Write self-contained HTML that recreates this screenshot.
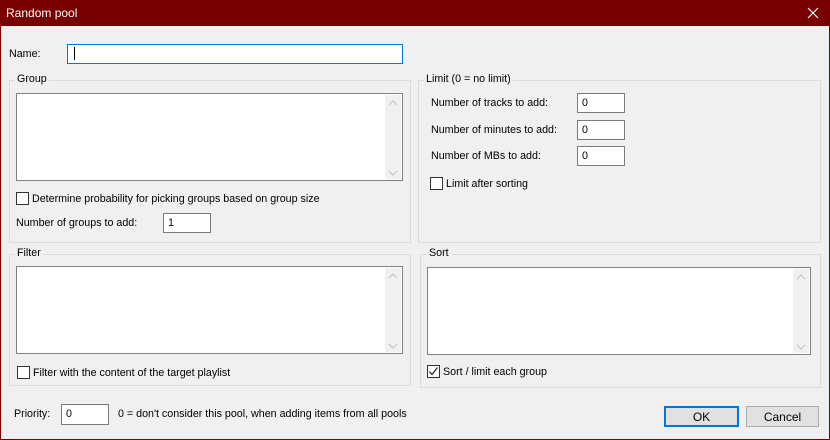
<!DOCTYPE html>
<html><head><style>
*{box-sizing:border-box;margin:0;padding:0}
body{width:830px;height:440px;background:#f0f0f0;font-family:"Liberation Sans",sans-serif;font-size:10.7px;color:#000;position:relative;overflow:hidden}
.a{position:absolute}
.frame{left:0;top:0;width:830px;height:440px;border:1px solid #7a0000;border-top:none}
.title{left:0;top:0;width:830px;height:26px;background:#780000;color:#fff;font-size:12px;padding:6px 0 0 6px}
.in{background:#fff;border:1px solid #7a7a7a;padding:3px 0 0 4px}
.grp{border:1px solid #dcdcdc}
.lbl{background:#f0f0f0;padding:0 2px}
.list{background:#fff;border:1px solid #828282}
.sb{position:absolute;right:1px;top:1px;bottom:1px;width:16px;background:#f0f0f0}
.cb{width:13px;height:13px;border:1px solid #333;background:#fff}
.btn{background:#e1e1e1;border:1px solid #adadad;text-align:center;padding-top:3px;font-size:12px}
</style></head><body>
<div class="a title">Random pool</div>
<svg class="a" style="left:807px;top:7px" width="12" height="12"><path d="M1 1L11 11M11 1L1 11" stroke="#fff" stroke-width="1.2"/></svg>
<div class="a frame"></div>

<div class="a" style="left:9px;top:48px">Name:</div>
<div class="a in" style="left:67px;top:44px;width:336px;height:20px;border:1px solid #0078d7"><div style="width:1px;height:13px;background:#000;margin-left:2px;margin-top:-1px"></div></div>

<div class="a grp" style="left:9px;top:80px;width:402px;height:163px"></div>
<div class="a lbl" style="left:15px;top:73px">Group</div>
<div class="a list" style="left:16px;top:93px;width:387px;height:88px"><div class="sb"><svg width="16" height="86"><path d="M4 10L8 6L12 10M4 76L8 80L12 76" stroke="#c0c0c0" fill="none"/></svg></div></div>
<div class="a cb" style="left:16px;top:192px"></div>
<div class="a" style="left:32px;top:193px">Determine probability for picking groups based on group size</div>
<div class="a" style="left:16px;top:217px">Number of groups to add:</div>
<div class="a in" style="left:163px;top:213px;width:48px;height:20px">1</div>

<div class="a grp" style="left:418px;top:80px;width:403px;height:163px"></div>
<div class="a lbl" style="left:424px;top:73px">Limit (0 = no limit)</div>
<div class="a" style="left:431px;top:97px">Number of tracks to add:</div>
<div class="a in" style="left:577px;top:93px;width:48px;height:20px">0</div>
<div class="a" style="left:431px;top:124px">Number of minutes to add:</div>
<div class="a in" style="left:577px;top:120px;width:48px;height:20px">0</div>
<div class="a" style="left:431px;top:150px">Number of MBs to add:</div>
<div class="a in" style="left:577px;top:146px;width:48px;height:20px">0</div>
<div class="a cb" style="left:430px;top:177px"></div>
<div class="a" style="left:446px;top:178px">Limit after sorting</div>

<div class="a grp" style="left:9px;top:254px;width:402px;height:132px"></div>
<div class="a lbl" style="left:15px;top:247px">Filter</div>
<div class="a list" style="left:16px;top:266px;width:387px;height:88px"><div class="sb"><svg width="16" height="86"><path d="M4 10L8 6L12 10M4 76L8 80L12 76" stroke="#c0c0c0" fill="none"/></svg></div></div>
<div class="a cb" style="left:17px;top:366px"></div>
<div class="a" style="left:33px;top:367px">Filter with the content of the target playlist</div>

<div class="a grp" style="left:420px;top:254px;width:401px;height:134px"></div>
<div class="a lbl" style="left:427px;top:247px">Sort</div>
<div class="a list" style="left:427px;top:267px;width:384px;height:88px"><div class="sb"><svg width="16" height="86"><path d="M4 10L8 6L12 10M4 76L8 80L12 76" stroke="#c0c0c0" fill="none"/></svg></div></div>
<div class="a cb" style="left:427px;top:365px"><svg width="11" height="11" style="display:block"><path d="M1.5 5.5L4 8.5L9.5 1.5" stroke="#222" fill="none" stroke-width="1.2"/></svg></div>
<div class="a" style="left:443px;top:366px">Sort / limit each group</div>

<div class="a" style="left:14px;top:408px">Priority:</div>
<div class="a in" style="left:61px;top:404px;width:48px;height:21px">0</div>
<div class="a" style="left:118px;top:408px">0 = don't consider this pool, when adding items from all pools</div>
<div class="a btn" style="left:664px;top:406px;width:75px;height:21px;border:2px solid #0078d7;padding-top:2px">OK</div>
<div class="a btn" style="left:746px;top:406px;width:73px;height:21px">Cancel</div>
</body></html>
